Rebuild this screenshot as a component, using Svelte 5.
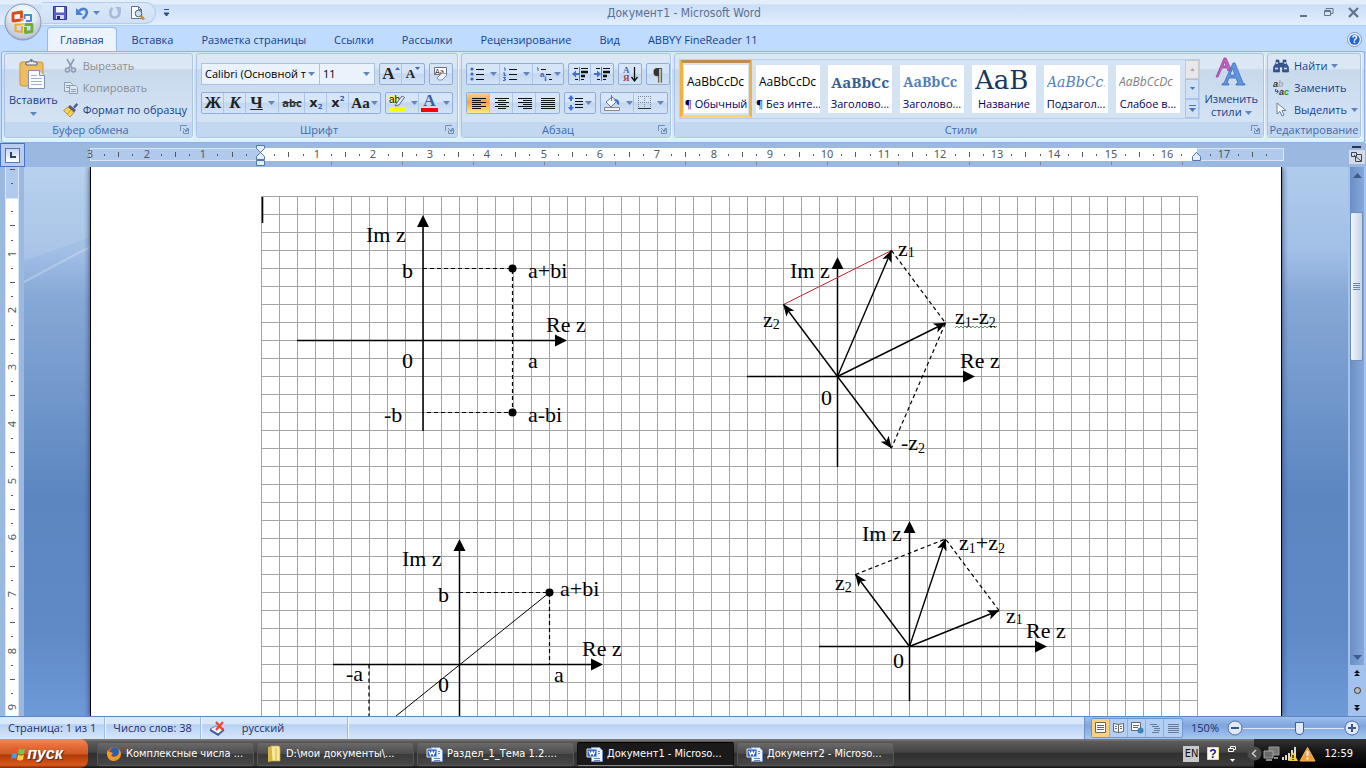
<script>
  const tabs = ['Главная', 'Вставка', 'Разметка страницы', 'Ссылки', 'Рассылки', 'Рецензирование', 'Вид', 'ABBYY FineReader 11'];

  const styles = [
    { sample: 'AaBbCcDc', name: '¶ Обычный', kind: 'plain' },
    { sample: 'AaBbCcDc', name: '¶ Без инте...', kind: 'plain' },
    { sample: 'AaBbCc', name: 'Заголово...', kind: 'h1' },
    { sample: 'AaBbCc', name: 'Заголово...', kind: 'h2' },
    { sample: 'AaB', name: 'Название', kind: 'title' },
    { sample: 'AaBbCc.', name: 'Подзагол...', kind: 'sub' },
    { sample: 'AaBbCcDc', name: 'Слабое в...', kind: 'weak' }
  ];

  const tasks = [
    { label: 'Комплексные числа ...', icon: 'firefox' },
    { label: 'D:\\мои документы\\...', icon: 'folder' },
    { label: 'Раздел_1_Тема 1.2....', icon: 'word' },
    { label: 'Документ1 - Microso...', icon: 'word', active: true },
    { label: 'Документ2 - Microso...', icon: 'word' }
  ];

  const CM = 56.7;
  const marks = (from, to, zero) => {
    const list = [];
    for (let q = from; q <= to; q++) {
      if (q === 0) continue;
      const kind = q % 4 === 0 ? 'n' : q % 2 === 0 ? 'l' : 'd';
      list.push({ at: Math.round(zero + (q * CM) / 4), kind, n: Math.abs(q / 4) });
    }
    return list;
  };
  const hMarks = marks(-12, 71, 170);
  const vMarks = marks(-3, 60, 30);
  const tabStops = Array.from({ length: 13 }, (_, i) => 170 + Math.round((i + 1) * 70.9));

  let zoom = $state(50);
</script>

{#snippet caret()}
  <svg class="caret" width="7" height="4" viewBox="0 0 7 4"><path d="M0 0h7L3.500 4z" fill="#5f86bf" /></svg>
{/snippet}

{#snippet launcher()}
  <button class="launch" aria-label="Параметры группы">
    <svg width="9" height="9" viewBox="0 0 9 9" fill="none" stroke="#6f8fb8"><path d="M.5 6V.5H7" /><path d="M3.500 5.500v3h5v-5h-2M3 3l3 3" /><path d="M5 6h2V4" stroke="#4c6c98" /></svg>
  </button>
{/snippet}

{#snippet icon(name)}
  {#if name === 'save'}
    <svg width="14" height="14" viewBox="0 0 14 14"><path d="M.500.500h13v13H.500z" fill="#5a5fc7" stroke="#33358c" /><path d="M3 1h8v5.500H3z" fill="#f4f6ff" /><path d="M3 9h8v4H3z" fill="#cfd6ee" /><path d="M4 10h3v3H4z" fill="#26286e" /></svg>
  {:else if name === 'undo'}
    <svg width="14" height="14" viewBox="0 0 14 14" fill="none"><path d="M4 5C8 1 13 3 11.500 8 11 10 9.500 11.500 7.500 12.500" stroke="#4b7fd6" stroke-width="2.600" /><path d="M1 2v7h7z" fill="#4b7fd6" /></svg>
  {:else if name === 'redo'}
    <svg width="14" height="14" viewBox="0 0 14 14" fill="none"><path d="M4.500 2C1 5 1.500 11.500 6.500 11.500s6-5 3.500-8" stroke="#a9bcd6" stroke-width="2.600" /><path d="M7 1h6v6z" fill="#a9bcd6" /></svg>
  {:else if name === 'preview'}
    <svg width="16" height="16" viewBox="0 0 16 16"><path d="M1.500 1.500h7l3 3v9h-10z" fill="#fff" stroke="#66708a" /><path d="M8.500 1.500v3h3" fill="none" stroke="#66708a" /><circle cx="8.500" cy="8.500" r="3.300" fill="#c5e2f6" stroke="#555e70" /><path d="m11 11 3 3.500" stroke="#c9882c" stroke-width="2.600" /></svg>
  {:else if name === 'paste'}
    <svg width="30" height="32" viewBox="0 0 30 32"><rect x="2" y="4" width="23" height="24" rx="2" fill="#eebd62" stroke="#c79643" /><path d="M8 7V4h3q2-5 5 0h3v3z" fill="#e6e8ee" stroke="#5a6478" /><circle cx="13.500" cy="3" r="1" fill="#5a6478" /><path d="M10.500 12.500h11l5 5v13h-16z" fill="#fbfcff" stroke="#7e90b5" /><path d="M21.500 12.500v5h5" fill="#dfe6f4" stroke="#7e90b5" /><path d="M13 17.500h6M13 20.500h11M13 23.500h11M13 26.500h11" stroke="#9eafcf" /></svg>
  {:else if name === 'cut'}
    <svg width="14" height="16" viewBox="0 0 14 16" fill="none" stroke="#8e9db5" stroke-width="1.600"><path d="m3 1 5 9M10 1 5 10" /><circle cx="3.500" cy="12" r="2" /><circle cx="9.500" cy="12" r="2" /></svg>
  {:else if name === 'copy'}
    <svg width="16" height="16" viewBox="0 0 16 16" fill="#dfe7f2" stroke="#8e9db5"><path d="M1.500 2.500h6l2 2v7h-8z" /><path d="M3 5.500h4M3 7.500h4" /><path d="M6.500 5.500h6l2 2v6h-8z" /><path d="M8 9.500h5M8 11.500h5" /></svg>
  {:else if name === 'brush'}
    <svg width="16" height="16" viewBox="0 0 16 16"><path d="m10 5 3.500-4 1.700 1.500L12 6.500z" fill="#4b5a98" /><path d="m7 3 6 5-2 2.500L5 5z" fill="#5c5c78" /><path d="M5 5l6 5.500-4 4.500L.500 8.500z" fill="#f5d25f" stroke="#a67c22" stroke-width=".8" /><path d="M7 15l-3-3 4-4" stroke="#d99a2b" fill="none" /></svg>
  {:else if name === 'clear'}
    <svg width="16" height="16" viewBox="0 0 16 16"><path d="M1.500 1.500h12v7h-12z" fill="#fff" stroke="#68727f" /><text x="2" y="8" font-size="7" font-family="DejaVu Sans" fill="#222">Aa</text><path d="m4 12 5-5q4 0 5 2l-5 5q-4 1-5-2z" fill="#f0f2fa" stroke="#7c8aac" /></svg>
  {:else if name === 'marker'}
    <svg width="18" height="18" viewBox="0 0 18 18"><path d="M1 1h9v9H1z" fill="#f3ef72" /><text x="1" y="9" font-size="10" font-family="Liberation Sans" fill="#111">ab</text><path d="m8 10 6-8 2.500 1.500L11 11l-4 1z" fill="#e3eaf7" stroke="#5a6a94" /><path d="M1 13h16v4H1z" fill="#ff0" /></svg>
  {:else if name === 'bullets'}
    <svg width="15" height="14" viewBox="0 0 15 14"><g fill="#3e64b8"><circle cx="2" cy="2" r="1.600" /><circle cx="2" cy="7" r="1.600" /><circle cx="2" cy="12" r="1.600" /></g><path d="M6 2.500h8M6 7.500h8M6 12.500h8" stroke="#111" /></svg>
  {:else if name === 'numbers'}
    <svg width="15" height="14" viewBox="0 0 15 14"><g fill="none" stroke="#3e64b8"><path d="M1 1h1v3M0 6h2l-1 2.500h2M0 10.500h2.500L1 12h1.500l-.5 1.500H0" /></g><path d="M6 2.500h8M6 7.500h8M6 12.500h8" stroke="#111" /></svg>
  {:else if name === 'levels'}
    <svg width="17" height="15" viewBox="0 0 17 15"><path d="M1 1h1v3" stroke="#3e64b8" fill="none" /><path d="M5 2.500h5M10 7.500h5M13 12.500h3" stroke="#111" /><text x="4" y="10" font-size="8" font-weight="bold" font-family="Liberation Sans" fill="#3e64b8">a</text><path d="M9.500 9.500v1M9.500 11v3" stroke="#3e64b8" stroke-width="1.500" /></svg>
  {:else if name === 'outdent' || name === 'indent'}
    <svg width="16" height="14" viewBox="0 0 16 14"><path d="M7.500 .500v13" stroke="#111" stroke-dasharray="1 1" /><path d="M2 1.500h4M9 1.500h7M9 12.500h3M3 12.500h3" stroke="#111" /><path d="M9 5h7M9 9h4" stroke="#111" stroke-width="2.600" />{#if name === 'outdent'}<path d="M0 7l4-3.500v2.500h3v2H4v2.500z" fill="#3f6fd0" />{:else}<path d="M7 7 3 3.500v2.500H0v2h3v2.500z" fill="#3f6fd0" />{/if}</svg>
  {:else if name === 'sort'}
    <svg width="15" height="18" viewBox="0 0 15 18"><text x="0" y="8" font-size="9" font-weight="bold" font-family="Liberation Serif" fill="#3e64b8">А</text><text x="0" y="16" font-size="9" font-weight="bold" font-family="Liberation Serif" fill="#a3434f">Я</text><path d="M11.500 2v13M8.500 12l3 4 3-4" stroke="#111" fill="none" stroke-width="1.300" /></svg>
  {:else if name === 'left'}
    <svg width="14" height="13" viewBox="0 0 14 13" stroke="#111"><path d="M0 1.500h14M0 3.500h9M0 5.500h14M0 7.500h9M0 9.500h14M0 11.500h9" /></svg>
  {:else if name === 'center'}
    <svg width="14" height="13" viewBox="0 0 14 13" stroke="#111"><path d="M0 1.500h14M3 3.500h8M0 5.500h14M3 7.500h8M0 9.500h14M3 11.500h8" /></svg>
  {:else if name === 'right'}
    <svg width="14" height="13" viewBox="0 0 14 13" stroke="#111"><path d="M0 1.500h14M5 3.500h9M0 5.500h14M5 7.500h9M0 9.500h14M5 11.500h9" /></svg>
  {:else if name === 'justify'}
    <svg width="14" height="13" viewBox="0 0 14 13" stroke="#111"><path d="M0 1.500h14M0 3.500h14M0 5.500h14M0 7.500h14M0 9.500h14M0 11.500h14" /></svg>
  {:else if name === 'spacing'}
    <svg width="16" height="16" viewBox="0 0 16 16"><path d="M3 0l3 4H4v2H2V4H0zM3 16l-3-4h2v-2h2v2h2z" fill="#3f6fd0" /><path d="M7 3.500h8M7 6.500h8M7 9.500h8M7 12.500h8" stroke="#111" /></svg>
  {:else if name === 'fill'}
    <svg width="18" height="17" viewBox="0 0 18 17"><path d="m3 7 6-5 5 4-6 6z" fill="#f3f6fb" stroke="#6c7689" /><path d="M8.500 0v6" stroke="#6c7689" fill="none" /><path d="M12 4q5 0 4 6l-2-1q0-3-3-3z" fill="#3f6fc6" /><path d="M1.500 12.500h15v3h-15z" fill="#f5f5f5" stroke="#888" /></svg>
  {:else if name === 'border'}
    <svg width="14" height="14" viewBox="0 0 14 14" fill="none"><path d="M.500 0v13M12.500 0v13M6.500 0v13M0 .500h13M0 6.500h13" stroke="#7b8699" stroke-dasharray="1 1" /><path d="M0 12.500h13" stroke="#333" /></svg>
  {:else if name === 'styles'}
    <svg width="32" height="30" viewBox="0 0 32 30"><path d="M1 20 9 1h2l6 13h-4l-1-3H7l-4 9zM8 9h3L9.500 5z" fill="#c45fc0" stroke="#933b94" stroke-width=".7" fill-rule="evenodd" /><path d="M7 28v-1l2-1 9-20h2l8 20 2 1v1h-9v-1l2-1-2-5h-7l-2 5 2 1v1zM15 18h5l-2.500-7z" fill="#5f95e2" stroke="#3463ad" stroke-width=".7" fill-rule="evenodd" /></svg>
  {:else if name === 'find'}
    <svg width="16" height="14" viewBox="0 0 16 14"><path d="M3 1h3v3h4V1h3v3l2.500 4v5h-6V8h-3v5h-6V8L3 4z" fill="#3a5690" stroke="#253c6c" stroke-width=".6" /><path d="M2 9.500h3M11 9.500h3M4 3v2M12 3v2" stroke="#cfe0fa" stroke-width="1.500" /></svg>
  {:else if name === 'replace'}
    <svg width="17" height="16" viewBox="0 0 17 16"><text x="0" y="7" font-size="9" font-weight="bold" font-family="Liberation Sans" fill="#333">a<tspan fill="#aaa">b</tspan></text><text x="6" y="15" font-size="9" font-weight="bold" font-family="Liberation Sans" fill="#333">a<tspan fill="#239a23">c</tspan></text><path d="M2.500 9v2.500H5M3.500 9.500l2 2-2 2" stroke="#3d5f98" fill="none" /></svg>
  {:else if name === 'select'}
    <svg width="12" height="16" viewBox="0 0 12 16"><path d="M2 1v11l3-2.500L7 14l2-1-2-4.500h4z" fill="#fff" stroke="#6b7d9c" /></svg>
  {:else if name === 'firefox'}
    <svg width="16" height="16" viewBox="0 0 16 16"><circle cx="8" cy="8" r="7" fill="#e2641b" /><circle cx="8.500" cy="6" r="4.500" fill="#2d5fa8" /><path d="M1 3q0 3 3 3l3 1-2 3q3 2 6 0 3-2 2-7 3 4 1 8-3 4-7 4Q0 14 1 3z" fill="#f69a24" /></svg>
  {:else if name === 'folder'}
    <svg width="16" height="18" viewBox="0 0 16 18"><path d="M2 2l5-1v15l-5 1z" fill="#d8b44c" /><path d="M5 1h8l1 2v13H6z" fill="#f7e796" stroke="#c9a640" stroke-width=".7" /><path d="M10 3v13" stroke="#d5b551" /></svg>
  {:else if name === 'word'}
    <svg width="17" height="17" viewBox="0 0 17 17"><path d="M5.500 1.500h8l3 3v11h-11z" fill="#eef4ff" stroke="#7594cc" /><path d="M8 12.500h6M8 14.500h6M12 5.500h2M12 7.500h2" stroke="#5f86cb" /><path d="M1 3h10v8H1z" fill="#2b5fc0" stroke="#dce9ff" /><path d="m3 5 1.500 4L6 5.500 7.500 9 9 5" stroke="#fff" fill="none" stroke-width="1.200" /></svg>
  {/if}
{/snippet}

{#snippet axis(x, y, left, right, top, bottom)}
  <path d="M{x} {bottom}V{top + 9}M{left} {y}H{right - 9}" stroke="#000" stroke-width="1.500" fill="none" />
  <path d="M{x} {top}l6 12h-12zM{right} {y}l-12 -6v12z" />
{/snippet}

{#snippet vector(x1, y1, x2, y2)}
  <path d="M{x1} {y1}L{x2} {y2}" stroke="#000" stroke-width="1.400" marker-end="url(#vec)" />
{/snippet}

<div class="app">
  <header class="titlebar">
    <div class="quick">
      <button aria-label="Сохранить">{@render icon('save')}</button>
      <button aria-label="Отменить" class="undo">{@render icon('undo')}{@render caret()}</button>
      <button aria-label="Вернуть">{@render icon('redo')}</button>
      <button aria-label="Предварительный просмотр">{@render icon('preview')}</button>
    </div>
    <button class="more" aria-label="Настройка панели"><svg width="7" height="8" viewBox="0 0 7 8"><path d="M1 .500h5M1 4h5L3.500 7z" fill="#2e4f86" stroke="#2e4f86" /></svg></button>
    <h1>Документ1 - Microsoft Word</h1>
    <div class="winbtns">
      <button aria-label="Свернуть"><svg width="11" height="11" viewBox="0 0 11 11"><path d="M2 8h7v2H2z" fill="#64748c" /></svg></button>
      <button aria-label="Восстановить"><svg width="11" height="11" viewBox="0 0 11 11" fill="none" stroke="#64748c"><path d="M3 2.500V1.500h7v5H8" /><path d="M1.500 3.500h6v5h-6zM1 4.500h7" /></svg></button>
      <button aria-label="Закрыть"><svg width="11" height="11" viewBox="0 0 11 11"><path d="m1 1 9 9M10 1l-9 9" stroke="#64748c" stroke-width="2.400" /></svg></button>
    </div>
  </header>
  <button class="orb" aria-label="Кнопка Office">
    <svg width="38" height="38" viewBox="0 0 38 38">
      <defs><radialGradient id="orb" cx=".5" cy=".3" r=".7"><stop offset="0" stop-color="#fff" /><stop offset=".55" stop-color="#e3e9f2" /><stop offset="1" stop-color="#a8b5c9" /></radialGradient></defs>
      <circle cx="19" cy="19" r="18" fill="url(#orb)" stroke="#8294b2" />
      <path d="M3 19a16 16 0 0 0 32 0q-16 5-32 0z" fill="#c9d3e2" opacity=".6" />
      <g fill="none" stroke-width="2.800" stroke-linejoin="round">
        <path d="M17.500 15.500V9L9 10.500V18l8-1" stroke="#dc4a1c" />
        <path d="M20.500 16v-4h6.500v6h-5" stroke="#3e8fd8" stroke-width="2" />
        <path d="M17 21.500h-5.500V28l6.500 1v-6" stroke="#f3a92a" stroke-width="2" />
        <path d="M20.500 21.500H28v7l-6.500 1V24" stroke="#6cae3a" />
      </g>
      <path d="M16.500 16h3v2h-3z" fill="#f08a24" /><path d="M17 20h3v2h-3z" fill="#e8c93a" />
    </svg>
  </button>

  <nav class="tabs">
    {#each tabs as t, i}<button class:on={i === 0}>{t}</button>{/each}
    <button class="help" aria-label="Справка"><svg width="15" height="15" viewBox="0 0 15 15"><circle cx="7.500" cy="7.500" r="7" fill="#fff" stroke="#7292c8" /><circle cx="7.500" cy="7.500" r="5.200" fill="#2463d2" /><text x="7.500" y="11" font-size="10" font-weight="bold" text-anchor="middle" font-family="Liberation Sans" fill="#fff">?</text></svg></button>
  </nav>

  <section class="ribbon">
    <div class="group clip">
      <div class="body">
        <button class="big">{@render icon('paste')}<span>Вставить</span>{@render caret()}</button>
        <div class="stack">
          <button class="dim"><i>{@render icon('cut')}</i>Вырезать</button>
          <button class="dim"><i>{@render icon('copy')}</i>Копировать</button>
          <button><i>{@render icon('brush')}</i>Формат по образцу</button>
        </div>
      </div>
      <footer>Буфер обмена{@render launcher()}</footer>
    </div>

    <div class="group font">
      <div class="body rows">
        <div class="row">
          <div class="combos">
            <label class="combo wide"><select aria-label="Шрифт"><option>Calibri (Основной текст)</option></select>{@render caret()}</label>
            <label class="combo"><select aria-label="Размер шрифта"><option>11</option></select>{@render caret()}</label>
          </div>
          <div class="set"><button class="serif grow" aria-label="Увеличить размер">A<svg width="5" height="3" viewBox="0 0 5 3"><path d="M0 3h5L2.500 0z" fill="#3f66b0" /></svg></button><button class="serif shrink" aria-label="Уменьшить размер">A<svg width="5" height="3" viewBox="0 0 5 3"><path d="M0 0h5L2.500 3z" fill="#3f66b0" /></svg></button></div>
          <div class="set"><button aria-label="Очистить формат">{@render icon('clear')}</button></div>
        </div>
        <div class="row">
          <div class="set">
            <button class="serif b">Ж</button><button class="serif b it">К</button>
            <button class="serif b drop"><u>Ч</u>{@render caret()}</button>
            <button class="strike">abc</button>
            <button class="xs">x<sub>2</sub></button><button class="xs">x<sup>2</sup></button>
            <button class="serif aa">Aa{@render caret()}</button>
          </div>
          <div class="set">
            <button class="drop" aria-label="Цвет выделения">{@render icon('marker')}{@render caret()}</button>
            <button class="drop color" aria-label="Цвет текста"><b>A</b>{@render caret()}</button>
          </div>
        </div>
      </div>
      <footer>Шрифт{@render launcher()}</footer>
    </div>

    <div class="group para">
      <div class="body rows">
        <div class="row">
          <div class="set">
            <button class="drop" aria-label="Маркеры">{@render icon('bullets')}{@render caret()}</button>
            <button class="drop" aria-label="Нумерация">{@render icon('numbers')}{@render caret()}</button>
            <button class="tight" aria-label="Многоуровневый список">{@render icon('levels')}{@render caret()}</button>
          </div>
          <div class="set"><button aria-label="Уменьшить отступ">{@render icon('outdent')}</button><button aria-label="Увеличить отступ">{@render icon('indent')}</button></div>
          <div class="set"><button aria-label="Сортировка">{@render icon('sort')}</button></div>
          <div class="set"><button class="pil" aria-label="Все знаки">¶</button></div>
        </div>
        <div class="row">
          <div class="set align">
            <button class="sel" aria-label="По левому краю">{@render icon('left')}</button><button aria-label="По центру">{@render icon('center')}</button><button aria-label="По правому краю">{@render icon('right')}</button><button aria-label="По ширине">{@render icon('justify')}</button>
          </div>
          <div class="set"><button class="tight" aria-label="Интервал">{@render icon('spacing')}{@render caret()}</button></div>
          <div class="set"><button class="drop" aria-label="Заливка">{@render icon('fill')}{@render caret()}</button><button class="drop" aria-label="Границы">{@render icon('border')}{@render caret()}</button></div>
        </div>
      </div>
      <footer>Абзац{@render launcher()}</footer>
    </div>

    <div class="group sty">
      <div class="body">
        <div class="gallery">
          {#each styles as s, i}
            <button class="card" class:chosen={i === 0}><span class="paper"><span class="sample {s.kind}">{s.sample}</span><span class="nm">{s.name}</span></span></button>
          {/each}
          <div class="gscroll">
            <button class="off" aria-label="Вверх"><svg width="5" height="3" viewBox="0 0 5 3"><path d="M0 3h5L2.500 0z" fill="#aaa" /></svg></button>
            <button aria-label="Вниз"><svg width="5" height="3" viewBox="0 0 5 3"><path d="M0 0h5L2.500 3z" fill="#4a76b8" /></svg></button>
            <button aria-label="Ещё"><svg width="7" height="7" viewBox="0 0 7 7"><path d="M0 0h7v1H0zM0 3h7L3.500 7z" fill="#4a76b8" /></svg></button>
          </div>
        </div>
        <button class="big change">{@render icon('styles')}<span>Изменить<br />стили {@render caret()}</span></button>
      </div>
      <footer>Стили{@render launcher()}</footer>
    </div>

    <div class="group edit">
      <div class="body">
        <div class="stack">
          <button><i>{@render icon('find')}</i>Найти {@render caret()}</button>
          <button><i>{@render icon('replace')}</i>Заменить</button>
          <button><i>{@render icon('select')}</i>Выделить {@render caret()}</button>
        </div>
      </div>
      <footer>Редактирование</footer>
    </div>
  </section>

  <main class="work">
    <div class="rulerrow">
      <button class="tabsel" aria-label="Табуляция"><span><svg width="6" height="6" viewBox="0 0 6 6"><path d="M1 0v5h5" stroke="#2b4263" stroke-width="2" fill="none" /></svg></span></button>
      <svg class="hruler" height="24">
        <rect x="0" y="5" width="1194" height="13" fill="#d9e6f7" />
        <rect x="1" y="6" width="1192" height="11" fill="#b0c9ec" />
        <rect x="171" y="5" width="936" height="13" fill="#fff" />
        <g fill="#54595f">
          {#each hMarks as m}
            {#if m.kind === 'n'}<text x={m.at} y="15" text-anchor="middle">{m.n}</text>
            {:else if m.kind === 'l'}<rect x={m.at} y="9" width="1" height="5" />
            {:else}<rect x={m.at} y="11" width="1" height="2" />{/if}
          {/each}
          {#each tabStops as t}<rect x={t} y="19" width="1" height="3" fill="#7d8590" />{/each}
        </g>
        <g fill="#e6edf7" stroke="#4d78b0">
          <path d="M166.500 2.500h8v3l-4 4-4-4zM166.500 16.500v-3l4-4 4 4v3zM166.500 17.500h8v5h-8z" />
          <path d="M1102.500 17.500v-4l4-4 4 4v4z" />
        </g>
      </svg>
      <button class="split" aria-label="Линейка"><svg width="18" height="20" viewBox="0 0 18 20"><path d="M4 1h9v2H4z" fill="#26364f" /><rect x="1" y="5" width="16" height="14" fill="#d5dbe6" /><path d="M3.500 7.500h5v4h-5zM6 10l7 6M8 9.500h5.500v7h-6V12" stroke="#3c4658" fill="none" /></svg></button>
    </div>
    <div class="canvasrow">
      <div class="vruler">
        <svg width="14" height="100%">
          <rect width="14" height="31" fill="#b0c9ec" /><rect y="32" width="14" height="100%" fill="#fff" />
          <path d="M.500 0v900M13.500 0v900M0 31.500h14" stroke="#d9e6f7" />
          <g fill="#54595f">
            {#each vMarks as m}
              {#if m.kind === 'n'}<text transform="translate(11 {m.at}) rotate(-90)" text-anchor="middle">{m.n}</text>
              {:else if m.kind === 'l'}<rect x="5" y={m.at} width="5" height="1" />
              {:else}<rect x="6" y={m.at} width="2" height="1" />{/if}
            {/each}
          </g>
        </svg>
      </div>
      <div class="desk">
        <svg class="swoosh" width="100%" height="100%" preserveAspectRatio="none" viewBox="0 0 1324 549"><path d="M0 94Q330-30 700-60V-300H0z" fill="#fff" opacity=".1" /><path d="M0 115Q35 96 66 80" stroke="#fff" opacity=".25" fill="none" stroke-width="2" /></svg>
        <div class="sheet">
          <svg width="100%" height="100%">
            <defs>
              <pattern id="grid" x="170" y="29" width="18" height="18" patternUnits="userSpaceOnUse"><path d="M0 .500h18M.500 0v18" stroke="#a4a4a4" /></pattern>
              <marker id="vec" viewBox="0 0 12 12" markerWidth="12" markerHeight="12" refX="11.500" refY="6" orient="auto" markerUnits="userSpaceOnUse"><path d="M12 6 0 1l3 5-3 5z" /></marker>
            </defs>
            <rect x="170" y="29" width="937" height="100%" fill="url(#grid)" />
            <g transform="translate(-91 -167)" class="math">
              <path d="M262.500 197v26" stroke="#000" stroke-width="1.600" />

              {@render axis(423, 340.5, 297, 567, 215, 431)}
              <path class="dash" d="M423 268.500h89.500v144H423" />
              <circle cx="512.500" cy="268.500" r="4" /><circle cx="512.500" cy="412.500" r="4" />
              <text x="366" y="242">Im z</text><text x="402" y="278">b</text><text x="528" y="278">a+bi</text>
              <text x="546" y="332">Re z</text><text x="402" y="368">0</text><text x="528" y="368">a</text>
              <text x="384" y="422">-b</text><text x="528" y="422">a-bi</text>

              {@render axis(837.5, 376.5, 747, 975, 257, 467)}
              <path d="M783.500 304.500 891.500 250.500" stroke="#c8242c" />
              <path class="dash" d="M891.500 250.500l54 72.500-54 125" />
              {@render vector(837.5, 376.5, 891.5, 250.5)}
              {@render vector(837.5, 376.5, 783.5, 304.5)}
              {@render vector(837.5, 376.5, 945.5, 323)}
              {@render vector(837.5, 376.5, 891.5, 448)}
              <text x="790" y="278">Im z</text><text x="960" y="368">Re z</text><text x="821" y="405">0</text>
              <text x="898" y="256">z<tspan class="s" dy="1">1</tspan></text>
              <text x="763" y="327">z<tspan class="s" dy="2">2</tspan></text>
              <text x="901" y="450">-z<tspan class="s" dy="3">2</tspan></text>
              <text x="955" y="324">z<tspan class="s" dy="3">1</tspan><tspan dy="-3">-z</tspan><tspan class="s" dy="3">2</tspan></text>
              <path d="M955 328l2-2 2 2 2-2 2 2 2-2 2 2 2-2 2 2 2-2 2 2 2-2 2 2 2-2 2 2 2-2 2 2 2-2 2 2 2-2 2 2 2-2" stroke="#2f7a3a" fill="none" stroke-width=".8" />

              {@render axis(459.5, 664.5, 333, 603, 539, 900)}
              <path class="dash" d="M459 592.500h90.500v72M369 664.500V900" />
              <path d="M549.500 592.500 396 716" stroke="#000" />
              <circle cx="549.500" cy="592.500" r="4" />
              <text x="402" y="566">Im z</text><text x="438" y="602">b</text><text x="560" y="596">a+bi</text>
              <text x="582" y="656">Re z</text><text x="554" y="682">a</text><text x="346" y="681">-a</text><text x="438" y="692">0</text>

              {@render axis(909.5, 646.5, 819, 1047, 521, 701)}
              <path class="dash" d="M855.500 574.500l90-35.500 53.500 71.500" />
              {@render vector(909.5, 646.5, 945.5, 539)}
              {@render vector(909.5, 646.5, 855.5, 574.5)}
              {@render vector(909.5, 646.5, 999, 610.5)}
              <text x="862" y="541">Im z</text><text x="1026" y="638">Re z</text><text x="893" y="668">0</text>
              <text x="959" y="550">z<tspan class="s" dy="3">1</tspan><tspan dy="-3">+z</tspan><tspan class="s" dy="3">2</tspan></text>
              <text x="835" y="590">z<tspan class="s" dy="2">2</tspan></text>
              <text x="1006" y="623">z<tspan class="s" dy="1">1</tspan></text>
            </g>
          </svg>
        </div>
      </div>
      <div class="vscroll">
        <div class="track">
          <button aria-label="Прокрутка вверх"><svg width="9" height="5" viewBox="0 0 9 5"><path d="M0 5h9L4.500 0z" fill="#3f5b8b" /></svg></button>
          <div class="room"><button class="thumb" aria-label="Ползунок"><span></span></button></div>
          <button aria-label="Прокрутка вниз"><svg width="9" height="5" viewBox="0 0 9 5"><path d="M0 0h9L4.500 5z" fill="#3f5b8b" /></svg></button>
        </div>
        <button class="nav" aria-label="Предыдущая страница"><svg width="6" height="7" viewBox="0 0 6 7"><path d="M3 0l3 3H0zM3 3l3 3H0z" fill="#111" /></svg></button>
        <button class="nav" aria-label="Выбор объекта"><svg width="7" height="7" viewBox="0 0 7 7"><circle cx="3.500" cy="3.500" r="3" fill="#bbb" stroke="#333" /></svg></button>
        <button class="nav" aria-label="Следующая страница"><svg width="6" height="7" viewBox="0 0 6 7"><path d="M3 4L0 1h6zM3 7L0 4h6z" fill="#111" /></svg></button>
      </div>
    </div>
  </main>

  <section class="status">
    <button class="cell">Страница: 1 из 1</button>
    <button class="cell">Число слов: 38</button>
    <button class="cell lang"><svg width="17" height="15" viewBox="0 0 17 15"><path d="m1 8 6-3 8 3-6 5z" fill="#f2f4fa" stroke="#6a7ba6" /><path d="M1 9l8 5 6-5" stroke="#3c5aa0" fill="none" stroke-width="1.500" /><path d="m7 1 7 8M14 1 7 9" stroke="#ee4631" stroke-width="2.200" /></svg>русский</button>
    <div class="tools">
      <div class="views">
        <button class="on" aria-label="Разметка страницы"><svg width="12" height="12" viewBox="0 0 12 12"><path d="M.500.500h10v10H.500z" fill="#fff" stroke="#666" /><path d="M2 3.500h7M2 5.500h7M2 7.500h7" stroke="#666" /></svg></button>
        <button aria-label="Режим чтения"><svg width="12" height="12" viewBox="0 0 12 12"><path d="M.500 1.500l5 1 5-1v8l-5 1-5-1zM5.500 2v9M2 4.500h2M2 6.500h2M7 4.500h2M7 6.500h2" fill="#fff" stroke="#666" /></svg></button>
        <button aria-label="Веб-документ"><svg width="13" height="12" viewBox="0 0 13 12"><path d="M.500.500h9v8h-9z" fill="#fff" stroke="#666" /><path d="M2 3.500h6M2 5.500h5" stroke="#666" /><circle cx="9.500" cy="8.500" r="3" fill="#3b7fc9" /><path d="M8 7l2 1-1 3z" fill="#4aa54a" /></svg></button>
        <button aria-label="Структура"><svg width="11" height="11" viewBox="0 0 11 11" stroke="#697a96"><path d="M0 1.500h7M2 3.500h7M4 5.500h6M4 7.500h6M2 9.500h7" /></svg></button>
        <button aria-label="Черновик"><svg width="11" height="11" viewBox="0 0 11 11" stroke="#697a96"><path d="M0 1.500h11M0 3.500h11M0 5.500h11M0 7.500h11M0 9.500h11" /></svg></button>
      </div>
      <button class="pct">150%</button>
      <button class="round" aria-label="Уменьшить"><svg width="16" height="16" viewBox="0 0 16 16"><circle cx="8" cy="8" r="7" fill="#dfe9f8" stroke="#4f71a8" /><path d="M4 8h8" stroke="#3d5784" stroke-width="2" /></svg></button>
      <input type="range" min="0" max="100" bind:value={zoom} aria-label="Масштаб" />
      <button class="round" aria-label="Увеличить"><svg width="16" height="16" viewBox="0 0 16 16"><circle cx="8" cy="8" r="7" fill="#dfe9f8" stroke="#4f71a8" /><path d="M4 8h8M8 4v8" stroke="#3d5784" stroke-width="2" /></svg></button>
    </div>
  </section>

  <footer class="taskbar">
    <button class="start"><svg width="15" height="15" viewBox="0 0 15 15"><path d="M2 2q3-2 5 0L6 7Q3 5 1 7z" fill="#f0562a" /><path d="M8 2.500q3 2 6 0l-1 5q-3 2-6 0z" fill="#7cc14a" /><path d="M1 8q3-2 5 0l-1 5q-3-2-5 0z" fill="#4a9be6" /><path d="M7 8.500q3 2 6 0l-1 5q-3 2-6 0z" fill="#fbd03c" /></svg>пуск</button>
    <div class="tasks">
      {#each tasks as t}<button class:active={t.active}>{@render icon(t.icon)}<span>{t.label}</span></button>{/each}
    </div>
    <div class="langbar"><button class="en">EN</button>
      <button aria-label="Справка"><svg width="13" height="14" viewBox="0 0 13 14"><path d="M.500.500h11v12h-11z" fill="#fff" stroke="#e8dc7a" /><text x="6" y="11" font-size="12" font-weight="bold" text-anchor="middle" font-family="Liberation Sans" fill="#111c6e">?</text></svg></button>
      <button aria-label="Параметры"><svg width="9" height="18" viewBox="0 0 9 18"><path d="M2.500 3V1.500h5v3H6M.500 3.500h5v3h-5z" stroke="#fff" fill="none" /><path d="M2 14h5l-2.500 3z" fill="#fff" /></svg></button>
    </div>
    <div class="tray">
      <button class="chev" aria-label="Показать значки"><svg width="15" height="15" viewBox="0 0 15 15"><circle cx="7.500" cy="7.500" r="7" fill="#4c4c4c" /><path d="M9 4 5.500 7.500 9 11" stroke="#ccc" fill="none" stroke-width="1.500" /></svg></button>
      <svg width="17" height="16" viewBox="0 0 17 16"><path d="M6 1h10v8H6z" fill="#777" stroke="#999" /><path d="M1 5h9v7H1z" fill="#6a6a6a" stroke="#a5a5a5" /><path d="M3 14h6M11 12h4" stroke="#888" stroke-width="2" /></svg>
      <svg width="17" height="16" viewBox="0 0 17 16"><path d="M1 11h2v3H1zM4 9h2v5H4zM7 7h2v7H7zM10 4h2v10h-2zM13 1h2v13h-2z" fill="#d8d8d8" /><path d="M12 6l5 9H7z" fill="#f6cd2f" /><path d="M12 9v3M12 13v1" stroke="#222" stroke-width="1.400" /></svg>
      <svg width="17" height="16" viewBox="0 0 17 16"><path d="M8.500 1.500 16 15H1z" fill="#f59a35" stroke="#f8b45f" stroke-linejoin="round" /><path d="M8.500 5v5M8.500 11.500v2" stroke="#fff" stroke-width="2" /></svg>
      <time>12:59</time>
    </div>
  </footer>
</div>

<style>
  :global(body) { margin: 0; }
  .app { position: relative; display: flex; flex-direction: column; height: 100vh; overflow: hidden; font: 11px/16px "Open Sans", "Noto Sans", sans-serif; color: #15428b; background: #bfdbff; }
  button { font: inherit; color: inherit; background: none; border: 0; padding: 0; margin: 0; display: flex; align-items: center; justify-content: center; white-space: nowrap; }
  svg { flex: none; display: block; }

  .titlebar { display: flex; align-items: center; height: 26px; flex: none; box-sizing: border-box; background: linear-gradient(#e4eefb 0 15%, #cadef7 20%, #e2eefc); border-bottom: 1px solid #b0cfee; }
  .quick { display: flex; align-items: center; gap: 8px; height: 20px; margin-left: 42px; padding: 0 9px 0 11px; border: 1px solid #b5cdec; border-left: 0; border-radius: 0 12px 12px 0; background: linear-gradient(#dbe8f9, #cfe0f6); }
  .undo { gap: 4px; }
  .more { margin-left: 4px; width: 12px; }
  h1 { flex: 1; margin: 0; padding-right: 102px; text-align: center; font-size: 12px; line-height: 16px; font-weight: 400; color: #5b6f93; font-family: "DejaVu Sans Condensed", "DejaVu Sans", sans-serif; white-space: nowrap; }
  .winbtns { display: flex; gap: 14px; padding-right: 7px; }
  .orb { position: absolute; left: 4px; top: 3px; z-index: 3; }

  .tabs { display: flex; align-items: stretch; height: 25px; flex: none; padding: 2px 4px 0 48px; box-sizing: border-box; gap: 4px; }
  .tabs button { padding: 0 12px; border-radius: 3px 3px 0 0; }
  .tabs .on { background: #eaf3fe; box-shadow: 0 0 0 1px #97b9e6; }
  .tabs .help { margin-left: auto; padding: 0; }

  .ribbon { display: flex; align-items: stretch; gap: 3px; flex: none; height: 92px; box-sizing: border-box; padding: 1px 3px 4px 2px; margin: 0 1px; border: 1px solid #8db2e3; border-bottom-color: #8fb0d8; border-radius: 3px; background: linear-gradient(#dbe7f5 0 18%, #c8d9ed 20%, #d6e5f5 85%, #d9f4fd); }
  .group { display: flex; flex-direction: column; flex: none; box-sizing: border-box; border: 1px solid #a9c4e6; border-radius: 3px; box-shadow: 1px 1px #eef5fd; overflow: hidden; }
  .body { flex: 1; display: flex; min-height: 0; }
  .group footer { position: relative; flex: none; height: 15px; line-height: 15px; background: #c2d8f0; text-align: center; color: #3e6aaa; padding-right: 16px; }
  .group.edit footer { padding-right: 0; }
  .launch { position: absolute; right: 3px; top: 3px; }
  .clip { width: 189px; } .font { width: 262px; } .para { width: 210px; } .sty { flex: 1; min-width: 0; } .edit { width: 94px; }
  .big { flex-direction: column; justify-content: flex-start; padding: 4px 4px 0; line-height: 16px; }
  .big > span { margin: 2px 0 4px; text-align: center; }
  .stack { display: flex; flex-direction: column; padding-top: 1px; margin-left: 0; }
  .stack button { height: 22px; justify-content: flex-start; gap: 3px; }
  .stack i { width: 18px; display: flex; justify-content: center; }
  .dim { color: #8d8d8d; }
  .caret { display: inline-block; vertical-align: middle; }
  .edit .stack { margin-left: 4px; }
  .edit .stack button { gap: 4px; }
  .change { line-height: 13px; padding: 3px 5px 0 0; }
  .change > span { margin-top: 5px; }

  .rows { flex-direction: column; gap: 7px; padding: 9px 4px 0; }
  .row { display: flex; gap: 4px; height: 22px; }
  .combos { display: flex; width: 179px; }
  .combo { position: relative; display: flex; flex: 0 0 56px; min-width: 0; box-sizing: border-box; border: 1px solid #abc1de; background: #eaf2fb; }
  .combo.wide { flex: 1; border-right: 0; }
  .combo select { appearance: none; flex: 1; min-width: 0; width: 100%; border: 0; background: none; font: inherit; padding: 0 13px 0 3px; color: #000; }
  .combo .caret { position: absolute; right: 4px; top: 8px; }
  .set { display: flex; box-sizing: border-box; height: 22px; border: 1px solid #8faedb; border-radius: 2px; background: linear-gradient(#d6e5f7 0 45%, #c3d7f0 50%, #d3e4f8); }
  .set button { width: 22px; position: relative; }
  .set button + button { box-shadow: -1px 0 #abc6e8; }
  .set .drop { width: 33px; gap: 5px; }
  .set .tight { width: 30px; gap: 1px; }
  .set.align button { width: 23px; }
  .serif { font-family: "Liberation Serif", serif; font-size: 17px; font-weight: 700; color: #222; }
  .serif svg:not(.caret) { align-self: flex-start; margin-top: 3px; }
  .shrink { font-size: 13px; }
  .it { font-style: italic; }
  .strike { text-decoration: line-through; color: #333; font-weight: 700; }
  .set .strike { width: 26px; }
  .xs { font: 700 13px/14px "DejaVu Sans", sans-serif; color: #222; }
  .xs sub, .xs sup { font-size: 7px; line-height: 7px; color: #2f62b8; }
  .xs sub { align-self: flex-end; margin-bottom: 2px; }
  .xs sup { align-self: flex-start; margin-top: 3px; }
  .set .aa { width: 31px; font-size: 15px; gap: 1px; }
  .color b { font: 700 17px/12px "Liberation Serif", serif; color: #3a5f9f; border-bottom: 4px solid #f00; padding: 0 2px 1px; }
  .pil { color: #333; font-size: 17px; }
  .set .sel { background: linear-gradient(#fbd28f, #fb9d45 45%, #fed060 80%, #ffe88c); }

  .gallery { display: flex; flex: 1; min-width: 0; height: 60px; box-sizing: border-box; margin: 5px 4px 0 4px; border: 1px solid #b9d0ed; background: #d4e4f5; }
  .card { flex: 0 1 72px; min-width: 0; box-sizing: border-box; padding: 0 4px; }
  .chosen { border: 3px solid #f4b23c; border-top-color: #c08c4a; border-bottom-color: #fcd768; padding: 0 1px; border-radius: 2px; }
  .paper { width: 100%; height: 48px; background: #fff; display: flex; flex-direction: column; overflow: hidden; color: #000066; }
  .sample { height: 32px; line-height: 34px; flex: none; overflow: hidden; margin: 0 3px; text-align: left; color: #000; font-size: 12px; }
  .nm { line-height: 14px; text-align: center; }
  .h1, .h2 { font: 700 15px/34px "Noto Serif", "DejaVu Serif", serif; color: #365f91; }
  .h2 { color: #4f81bd; font-size: 14px; }
  .title { font: 26px/30px "DejaVu Serif", serif; color: #17365d; }
  .sub { font: italic 14px/34px "DejaVu Serif", serif; color: #4f81bd; }
  .weak { font-style: italic; color: #808080; }
  .gscroll { display: flex; flex-direction: column; width: 14px; margin-left: auto; }
  .gscroll button { flex: 1; border: 1px solid #a9c4e6; background: #d0e1f6; }
  .gscroll .off { background: #e8e8ea; border-color: #ccc; }

  .work { flex: 1; min-height: 0; display: flex; flex-direction: column; background: #9bb9e0; }
  .rulerrow { display: flex; height: 24px; flex: none; }
  .tabsel { width: 25px; border: 1px solid #4672c4; background: #b8cdee; box-sizing: border-box; }
  .tabsel span { width: 13px; height: 13px; border: 1px solid #5478b5; background: linear-gradient(#c4d6f0, #fff); display: flex; align-items: center; justify-content: center; }
  .hruler { flex: 0 1 1194px; margin: 0 auto; min-width: 0; overflow: visible; }
  .hruler text, .vruler text { font: 11px "Noto Sans", sans-serif; }
  .split { width: 18px; }
  .canvasrow { flex: 1; min-height: 0; display: flex; }
  .vruler { width: 24px; padding-left: 5px; box-sizing: border-box; }
  .desk { flex: 1; min-width: 0; display: flex; justify-content: center; position: relative; background: linear-gradient(#b0ccec, #a2bfe6 15%, #86a8d6 24%, #5c86c0 60%, #5f8ac6 85%, #6e9ad8); }
  .swoosh { position: absolute; left: 0; top: 0; }
  .sheet { position: relative; flex: 0 1 1192px; box-sizing: border-box; border: solid #000; border-width: 0 1px; background: #fff; box-shadow: 0 0 6px #29426d; clip-path: inset(0 -6px); }
  .math text { font: 22px "Liberation Serif", serif; }
  .math .s { font-size: 14px; }
  .dash { fill: none; stroke: #000; stroke-dasharray: 4 3; stroke-width: 1.200; }
  .vscroll { width: 18px; display: flex; flex-direction: column; background: #a3c2ee; }
  .track { flex: 1; display: flex; flex-direction: column; margin: 0 2px; background: linear-gradient(90deg, #6a8fc4, #86a9da); }
  .track > button { height: 16px; }
  .room { flex: 1; padding-top: 29px; }
  .thumb { width: 13px; height: 34%; border: 1px solid #6e8db8; border-radius: 2px; background: linear-gradient(90deg, #f2f6fc, #c4d3ea); }
  .thumb span { width: 7px; height: 7px; background: repeating-linear-gradient(#6d86ad 0 1px, transparent 1px 2px); }
  .nav { height: 17px; }

  .status { display: flex; align-items: stretch; flex: none; height: 23px; box-sizing: border-box; border-top: 1px solid #5c86bf; background: linear-gradient(#d9e8fb 0 30%, #b6d1f4 35%, #d7e6f9); color: #1f2f6b; }
  .cell { padding: 0 8px; border-right: 1px solid #9ebbe2; box-shadow: 1px 0 #eef5fd; }
  .lang { gap: 16px; width: 147px; justify-content: flex-start; }
  .tools { margin-left: auto; display: flex; align-items: center; padding: 0 6px 0 6px; background: linear-gradient(#9ebfec, #7fa6dc 40%, #a6c7f2); border-left: 1px solid #6d94cc; }
  .views { display: flex; align-self: stretch; margin: 1px 0; border: 1px solid #6f96cf; border-radius: 2px; background: #b3cff3; }
  .views button { width: 18px; }
  .views button + button { box-shadow: -1px 0 #8fb2e2; }
  .views .on { background: #fbcf80; }
  .pct { width: 44px; }
  input[type='range'] { appearance: none; width: 101px; height: 16px; margin: 0; background: linear-gradient(#dfeafa, #dfeafa) center / 100% 1px no-repeat; }
  input[type='range']::-webkit-slider-thumb { appearance: none; width: 9px; height: 13px; margin-left: 6px; background: #e1eafa; border: 1px solid #3f5f98; border-radius: 1px 1px 5px 5px; }

  .taskbar { display: flex; flex: none; height: 29px; background: linear-gradient(#777 0 4%, #5c5c5c 8%, #444 45%, #303030 50%, #3c3c3c 90%, #111); font: 11px/16px "DejaVu Sans Condensed", "DejaVu Sans", sans-serif; color: #fff; }
  .start { width: 88px; padding-right: 14px; box-sizing: border-box; gap: 1px; border-radius: 0 8px 8px 0; background: linear-gradient(#f08a5a, #e8703c 20%, #d25a24 50%, #b03c08 55%, #d8581c 90%, #7a2a06); font: italic 700 16px/20px "Liberation Sans", sans-serif; text-shadow: 1px 1px 1px #333; }
  .tasks { display: flex; flex: 1; min-width: 0; gap: 3px; padding: 3px 0 2px 9px; }
  .tasks button { flex: 0 1 157px; min-width: 0; justify-content: flex-start; gap: 4px; padding: 0 8px; border: 1px solid #555; border-radius: 2px; background: linear-gradient(#6a6a6a, #4d4d4d 48%, #3a3a3a 52%, #484848); box-sizing: border-box; }
  .tasks .active { background: #1a1a1a; border-color: #000 #111 #888; }
  .langbar { display: flex; align-items: center; gap: 8px; padding-right: 17px; }
  .langbar .en { background: #c9c9c9; color: #111; width: 16px; height: 16px; }
  .tray { display: flex; align-items: center; gap: 1px; background: linear-gradient(#333, #111 50%, #000); padding-right: 13px; }
  .chev { margin-left: -7px; }
  .tray time { margin-left: 7px; }
</style>
